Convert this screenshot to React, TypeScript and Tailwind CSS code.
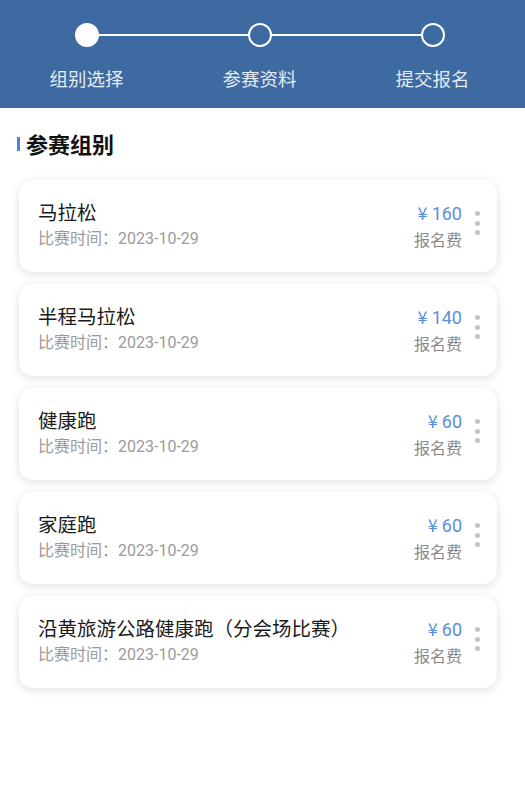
import React from "react";

const steps = ["组别选择", "参赛资料", "提交报名"];

const groups = [
  { name: "马拉松", date: "2023-10-29", fee: "160" },
  { name: "半程马拉松", date: "2023-10-29", fee: "140" },
  { name: "健康跑", date: "2023-10-29", fee: "60" },
  { name: "家庭跑", date: "2023-10-29", fee: "60" },
  { name: "沿黄旅游公路健康跑（分会场比赛）", date: "2023-10-29", fee: "60" },
];

export default function App() {
  return (
    <div
      className="min-h-[808px] w-[525px] bg-white"
      style={{ fontFamily: '"Noto Sans CJK SC", "Noto Sans", sans-serif' }}
    >
      {/* Step header */}
      <header className="bg-[#3d6aa1] pt-[23px] pb-[18px] pr-[6px]">
        <div className="grid grid-cols-3">
          {steps.map((label, idx) => (
            <div key={label} className="flex flex-col items-center">
              <div className="flex w-full items-center">
                <div className={`h-[2px] flex-1 ${idx === 0 ? "" : "bg-white"}`} />
                <div
                  className={`h-[24px] w-[24px] rounded-full border-2 border-white ${
                    idx === 0 ? "bg-white" : "bg-[#3d6aa1]"
                  }`}
                />
                <div className={`h-[2px] flex-1 ${idx === 2 ? "" : "bg-white"}`} />
              </div>
              <span className="mt-[19px] text-[18.5px] leading-[24px] text-[#e4ebf4]">{label}</span>
            </div>
          ))}
        </div>
      </header>

      {/* Section title */}
      <div className="mt-[20px] flex items-center px-[17px]">
        <span className="mt-[2px] h-[14px] w-[3px] bg-[#4a84e8]" />
        <h2 className="ml-[6px] text-[22px] font-bold leading-[30px] text-[#111]">参赛组别</h2>
      </div>

      {/* Group cards */}
      <div className="mt-[22px] flex flex-col gap-[12px] pl-[19px] pr-[28px]">
        {groups.map((g) => (
          <div
            key={g.name}
            className="flex h-[92px] items-start justify-between rounded-[14px] bg-white pt-[18px] pl-[19px] pr-[17px] shadow-[0_2px_10px_rgba(0,0,0,0.13)]"
          >
            <div className="flex flex-col">
              <span className="text-[19.5px] leading-[28px] text-[#1a1a1a]">{g.name}</span>
              <span className="text-[16px] leading-[22px] text-[#9a9a9a]">
                比赛时间：<span style={{ fontFamily: 'Roboto, "Noto Sans CJK SC", sans-serif' }}>{g.date}</span>
              </span>
            </div>
            <div className="flex items-start">
              <div className="flex flex-col items-end">
                <span className="text-[18px] leading-[28px] text-[#5b8fdc]">
                  ¥ <span style={{ fontFamily: 'Roboto, "Noto Sans CJK SC", sans-serif' }}>{g.fee}</span>
                </span>
                <span className="text-[16px] leading-[22px] text-[#8a8a8a]">报名费</span>
              </div>
              <div className="ml-[13px] mt-[13px] flex flex-col gap-[4.5px]">
                <span className="h-[5px] w-[5px] rounded-full bg-[#c4c4c4]" />
                <span className="h-[5px] w-[5px] rounded-full bg-[#c4c4c4]" />
                <span className="h-[5px] w-[5px] rounded-full bg-[#c4c4c4]" />
              </div>
            </div>
          </div>
        ))}
      </div>
    </div>
  );
}
